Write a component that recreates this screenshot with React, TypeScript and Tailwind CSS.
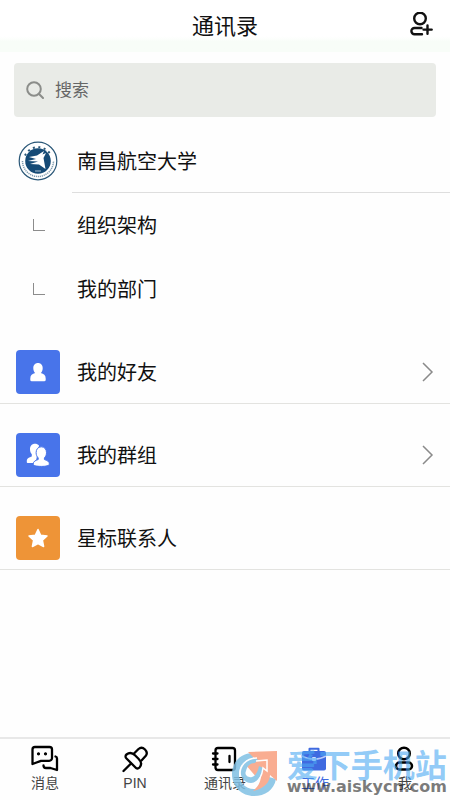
import type { ReactNode } from 'react'

interface ContactEntry {
  id: string
  label: string
  color: string
  icon: ReactNode
  arrow: boolean
}

interface TabItem {
  id: string
  label: string
  icon: ReactNode
  active?: boolean
}

const departments = ['组织架构', '我的部门']

const entries: ContactEntry[] = [
  { id: 'friends', label: '我的好友', color: 'bg-[#4874ea]', icon: <FriendIcon />, arrow: true },
  { id: 'groups', label: '我的群组', color: 'bg-[#4874ea]', icon: <GroupIcon />, arrow: true },
  { id: 'starred', label: '星标联系人', color: 'bg-[#ee9437]', icon: <StarIcon />, arrow: false },
]

const tabs: TabItem[] = [
  { id: 'messages', label: '消息', icon: <MessageIcon /> },
  { id: 'pin', label: 'PIN', icon: <PinIcon /> },
  { id: 'contacts', label: '通讯录', icon: <NotebookIcon /> },
  { id: 'work', label: '工作', icon: <BriefcaseIcon />, active: true },
  { id: 'me', label: '我', icon: <MeIcon /> },
]

export default function App() {
  return (
    <div className="min-h-screen flex flex-col bg-[#fefefe] text-[#111] font-['Liberation_Sans','Noto_Sans_CJK_SC',sans-serif]">
      <header className="grid grid-cols-[1fr_auto_1fr] items-center h-[52px] px-4 bg-linear-to-b from-white from-70% to-[#f8fdf8] to-80%">
        <h1 className="col-start-2 pt-px text-[22px] leading-8">通讯录</h1>
        <button aria-label="添加联系人" className="justify-self-end pb-1">
          <AddUserIcon />
        </button>
      </header>

      <main>
        <div className="px-[14px] pt-[11px]">
          <label className="flex items-center gap-[11px] h-[54px] px-3 rounded bg-[#e9ebe7] text-[#8b8d8a]">
            <SearchIcon />
            <input
              type="search"
              aria-label="搜索"
              placeholder="搜索"
              className="flex-1 min-w-0 pt-0.5 bg-transparent text-[17px] text-[#333] placeholder:text-[#666] outline-none"
            />
          </label>
        </div>

        <section className="pt-[13px]">
          <button className="w-full flex items-stretch h-[63px] text-left">
            <span className="w-[72px] pl-[18px] pb-0.5 flex items-center">
              <SchoolBadge />
            </span>
            <span className="flex-1 flex items-center pl-[5px] pt-0.5 border-b border-[#dedede] text-xl">南昌航空大学</span>
          </button>
          {departments.map((name) => (
            <button key={name} className="w-full flex items-center h-16 text-left">
              <span className="w-[77px] pl-[33px]">
                <span className="block w-3 h-3 border-l border-b border-[#8c8c8c]" />
              </span>
              <span className="pt-0.5 text-xl">{name}</span>
            </button>
          ))}
        </section>

        <section>
          {entries.map((entry) => (
            <button
              key={entry.id}
              className="w-full flex items-end h-[83px] px-4 pb-[9px] border-b border-[#e3e3e0] text-left"
            >
              <span className={`size-11 rounded flex items-center justify-center text-white ${entry.color}`}>
                {entry.icon}
              </span>
              <span className="flex-1 h-11 pl-[17px] pt-0.5 flex items-center text-xl">{entry.label}</span>
              {entry.arrow && (
                <span className="h-11 flex items-center">
                  <ChevronIcon />
                </span>
              )}
            </button>
          ))}
        </section>
      </main>

      <nav className="relative mt-auto grid grid-cols-5 h-[63px] border-t-2 border-[#e8e8e8] overflow-hidden">
        {tabs.map((tab) => (
          <button
            key={tab.id}
            className={`flex flex-col items-center pt-1 ${tab.active ? 'text-[#3f6ae0]' : 'text-black'}`}
          >
            {tab.icon}
            <span className={`text-sm leading-5 ${tab.active ? '' : 'text-[#444]'}`}>{tab.label}</span>
          </button>
        ))}
        <SiteMark />
      </nav>
    </div>
  )
}

function SiteMark() {
  return (
    <div className="absolute right-[3px] top-[11px] flex items-start pointer-events-none">
      <svg className="size-12 mr-2 opacity-85" viewBox="0 0 48 48" fill="none">
        <path d="M22 3C10 3 1 12 1 24C1 37 11 46 23 46C34 46 43 40 45 29L38 27C36 35 30 39 23 39C14 39 8 32 8 24C8 15 14 9 22 9Z" fill="#80c0e4" />
        <path d="M17 2L46 1V31L39 25C39 32 33 39 22 41C28 36 30 31 30 24L26 28L14 14L23 8Z" fill="#f99f7e" />
        <path d="M10 17C13 10 19 7 27 9L24 13C19 13 16 16 15 21C13 25 17 28 21 27C26 25 27 20 28 16L32 18C31 26 27 32 20 33C12 33 8 25 10 17Z" fill="#80c0e4" />
        <path d="M9 27C8 16 15 8 26 8M21 35C28 32 31 26 32 18L36 21V10L25 11" stroke="#fff" strokeWidth="1.500" />
      </svg>
      <div className="whitespace-nowrap">
        <div className="h-[29px] text-[32px] leading-8 font-bold text-[#4ba9f3]/60">爱下手机站</div>
        <div className="text-base leading-4 font-bold text-[#222]/60 font-['DejaVu_Sans',sans-serif]">
          www.aiskycn.com
        </div>
      </div>
    </div>
  )
}

function AddUserIcon() {
  return (
    <svg className="w-6 h-6" viewBox="0 0 24 24" fill="none" stroke="currentColor" strokeWidth="2.4" strokeLinecap="round">
      <circle cx="10" cy="6.5" r="5.800" />
      <path d="M11.5 16H4.500a3.100 3.100 0 0 0 0 6.200H12M17.500 13.500v8.200M13.500 17.600h8.200" />
    </svg>
  )
}

function SearchIcon() {
  return (
    <svg className="w-[18px] h-[18px]" viewBox="0 0 18 18" fill="none" stroke="currentColor" strokeWidth="2">
      <circle cx="8" cy="8" r="6.800" />
      <path d="M12.800 12.800L17 17" strokeLinecap="round" />
    </svg>
  )
}

function SchoolBadge() {
  return (
    <svg className="w-10 h-10" viewBox="0 0 40 40" fill="none">
      <circle cx="20" cy="20" r="18.800" fill="#fff" stroke="#2b5878" strokeWidth="1.200" />
      <path d="M7 14.500A14.300 14.300 0 0 1 33 14.500" stroke="#2b5878" strokeWidth="2" strokeDasharray="2 3.500" />
      <path d="M4.500 20A15.500 15.500 0 0 0 35.500 20" stroke="#2b5878" strokeWidth="1.500" strokeDasharray="1.200 0.800" strokeOpacity="0.600" />
      <circle cx="20" cy="20" r="12.800" fill="#164b76" />
      <path d="M11 16L19 14.500L26 10L24.500 13.500L28 12L25.500 17L27.500 28L21 23.500L12 23L20 20.500L10 20L18 18Z" fill="#fff" />
      <path d="M17 30H23" stroke="#a9bfd0" />
    </svg>
  )
}

function ChevronIcon() {
  return (
    <svg className="w-3 h-5" viewBox="0 0 12 20" fill="none" stroke="#8a8a8a" strokeWidth="1.500">
      <path d="M1 1L10 10L1 19" />
    </svg>
  )
}

function FriendIcon() {
  return (
    <svg className="w-6 h-6" viewBox="0 0 24 24" fill="currentColor">
      <path d="M12 3c-2.900 0-4.700 2.100-4.700 5.200 0 2.100.8 3.800 1.900 4.800-2.900.7-4.900 2.200-4.900 5.500V20c0 .7.500 1.200 1.200 1.200h13c.7 0 1.200-.5 1.200-1.200v-1.500c0-3.300-2-4.800-4.900-5.500 1.100-1 1.900-2.700 1.900-4.800C16.700 5.100 14.900 3 12 3Z" />
    </svg>
  )
}

function GroupIcon() {
  return (
    <svg className="w-6 h-6" viewBox="0 0 24 24" fill="currentColor">
      <path d="M9 .8C6 .8 4 3 4 6.200c0 2.200.8 3.800 1.800 5v2.300C3.500 14.300.8 15.200.8 18v1.200c0 .5.300.8.8.8h8L13 2.500C12 1.300 10.500.8 9 .8Z" />
      <path
        d="M15.300 3.800c-3.300 0-5.200 2.500-5.200 5.900 0 2.200.9 4 2.100 5.200v1.600c-2.500.9-5 1.800-5 4.500 0 1.700 3.500 2.400 8.100 2.400s8.100-.7 8.100-2.400c0-2.700-2.500-3.600-5-4.500v-1.600c1.200-1.200 2.100-3 2.100-5.200 0-3.400-1.900-5.900-5.200-5.900Z"
        stroke="#4874ea"
        strokeWidth="1"
      />
    </svg>
  )
}

function StarIcon() {
  return (
    <svg className="w-6 h-6" viewBox="0 0 24 24" fill="currentColor" stroke="currentColor" strokeWidth="1.500" strokeLinejoin="round">
      <path d="M12 3.500L14.700 9.200L21 10L16.400 14.300L17.600 20.500L12 17.500L6.400 20.500L7.600 14.300L3 10L9.300 9.200Z" />
    </svg>
  )
}

function MessageIcon() {
  return (
    <svg className="w-[30px] h-[30px]" viewBox="0 0 30 30" fill="none" stroke="currentColor" strokeWidth="2.300" strokeLinecap="round" strokeLinejoin="round">
      <path d="M5 4H19.500a2.500 2.500 0 0 1 2.500 2.500V15a2.800 2.800 0 0 1-2.800 2.800H11L2.500 21V6.500A2.500 2.500 0 0 1 5 4Z" />
      <path d="M25.500 13.500a2 2 0 0 1 1.500 2V27L20.500 25H16a2.500 2.500 0 0 1-2.500-2.500" />
      <circle cx="8.500" cy="10.800" r="1" fill="currentColor" strokeWidth="1.200" />
      <circle cx="15.500" cy="10.800" r="1" fill="currentColor" strokeWidth="1.200" />
    </svg>
  )
}

function PinIcon() {
  return (
    <svg className="w-[30px] h-[30px]" viewBox="0 0 30 30" fill="none" stroke="currentColor" strokeWidth="2.300" strokeLinecap="round" strokeLinejoin="round">
      <path d="M3.500 28L11 20.500M14 10.500L18.500 6C20.500 4.200 23 4.500 25 6.500S27.500 10.500 25.800 12.800L21.500 17.500" />
      <path d="M6.500 11.500C9.500 9 12.500 9.800 15 12.300L18.500 15.800C21.500 18.800 22.200 21.500 19.500 24.500C18 26 16.500 25.700 15.500 24.500L6.500 15.500C5.200 14.200 5.200 12.600 6.500 11.500Z" />
    </svg>
  )
}

function NotebookIcon() {
  return (
    <svg className="w-[30px] h-[30px]" viewBox="0 0 30 30" fill="none" stroke="currentColor" strokeWidth="2.300" strokeLinecap="round" strokeLinejoin="round">
      <rect x="5.500" y="5" width="19.500" height="22" rx="2.500" />
      <path d="M19.500 13V19M3 10.500H7.500M3 16H7.500M3 21.500H7.500" />
    </svg>
  )
}

function BriefcaseIcon() {
  return (
    <svg className="w-[30px] h-[30px]" viewBox="0 0 30 30" fill="none">
      <path d="M9.500 9V5.800H18.500V9" stroke="currentColor" strokeWidth="2" strokeLinejoin="round" />
      <rect x="2" y="8" width="24" height="19.500" rx="2" fill="currentColor" />
      <path d="M2 13C8.500 17 19.500 17 26 13" stroke="#b9cbfa" strokeWidth="1.500" />
      <rect x="12" y="14" width="4" height="4" rx="1" fill="#dbe5ff" />
    </svg>
  )
}

function MeIcon() {
  return (
    <svg className="w-[30px] h-[30px]" viewBox="0 0 30 30" fill="none" stroke="currentColor" strokeWidth="2.500">
      <circle cx="14" cy="10.500" r="5.800" />
      <rect x="6" y="19.500" width="16" height="7" rx="3.500" />
    </svg>
  )
}
